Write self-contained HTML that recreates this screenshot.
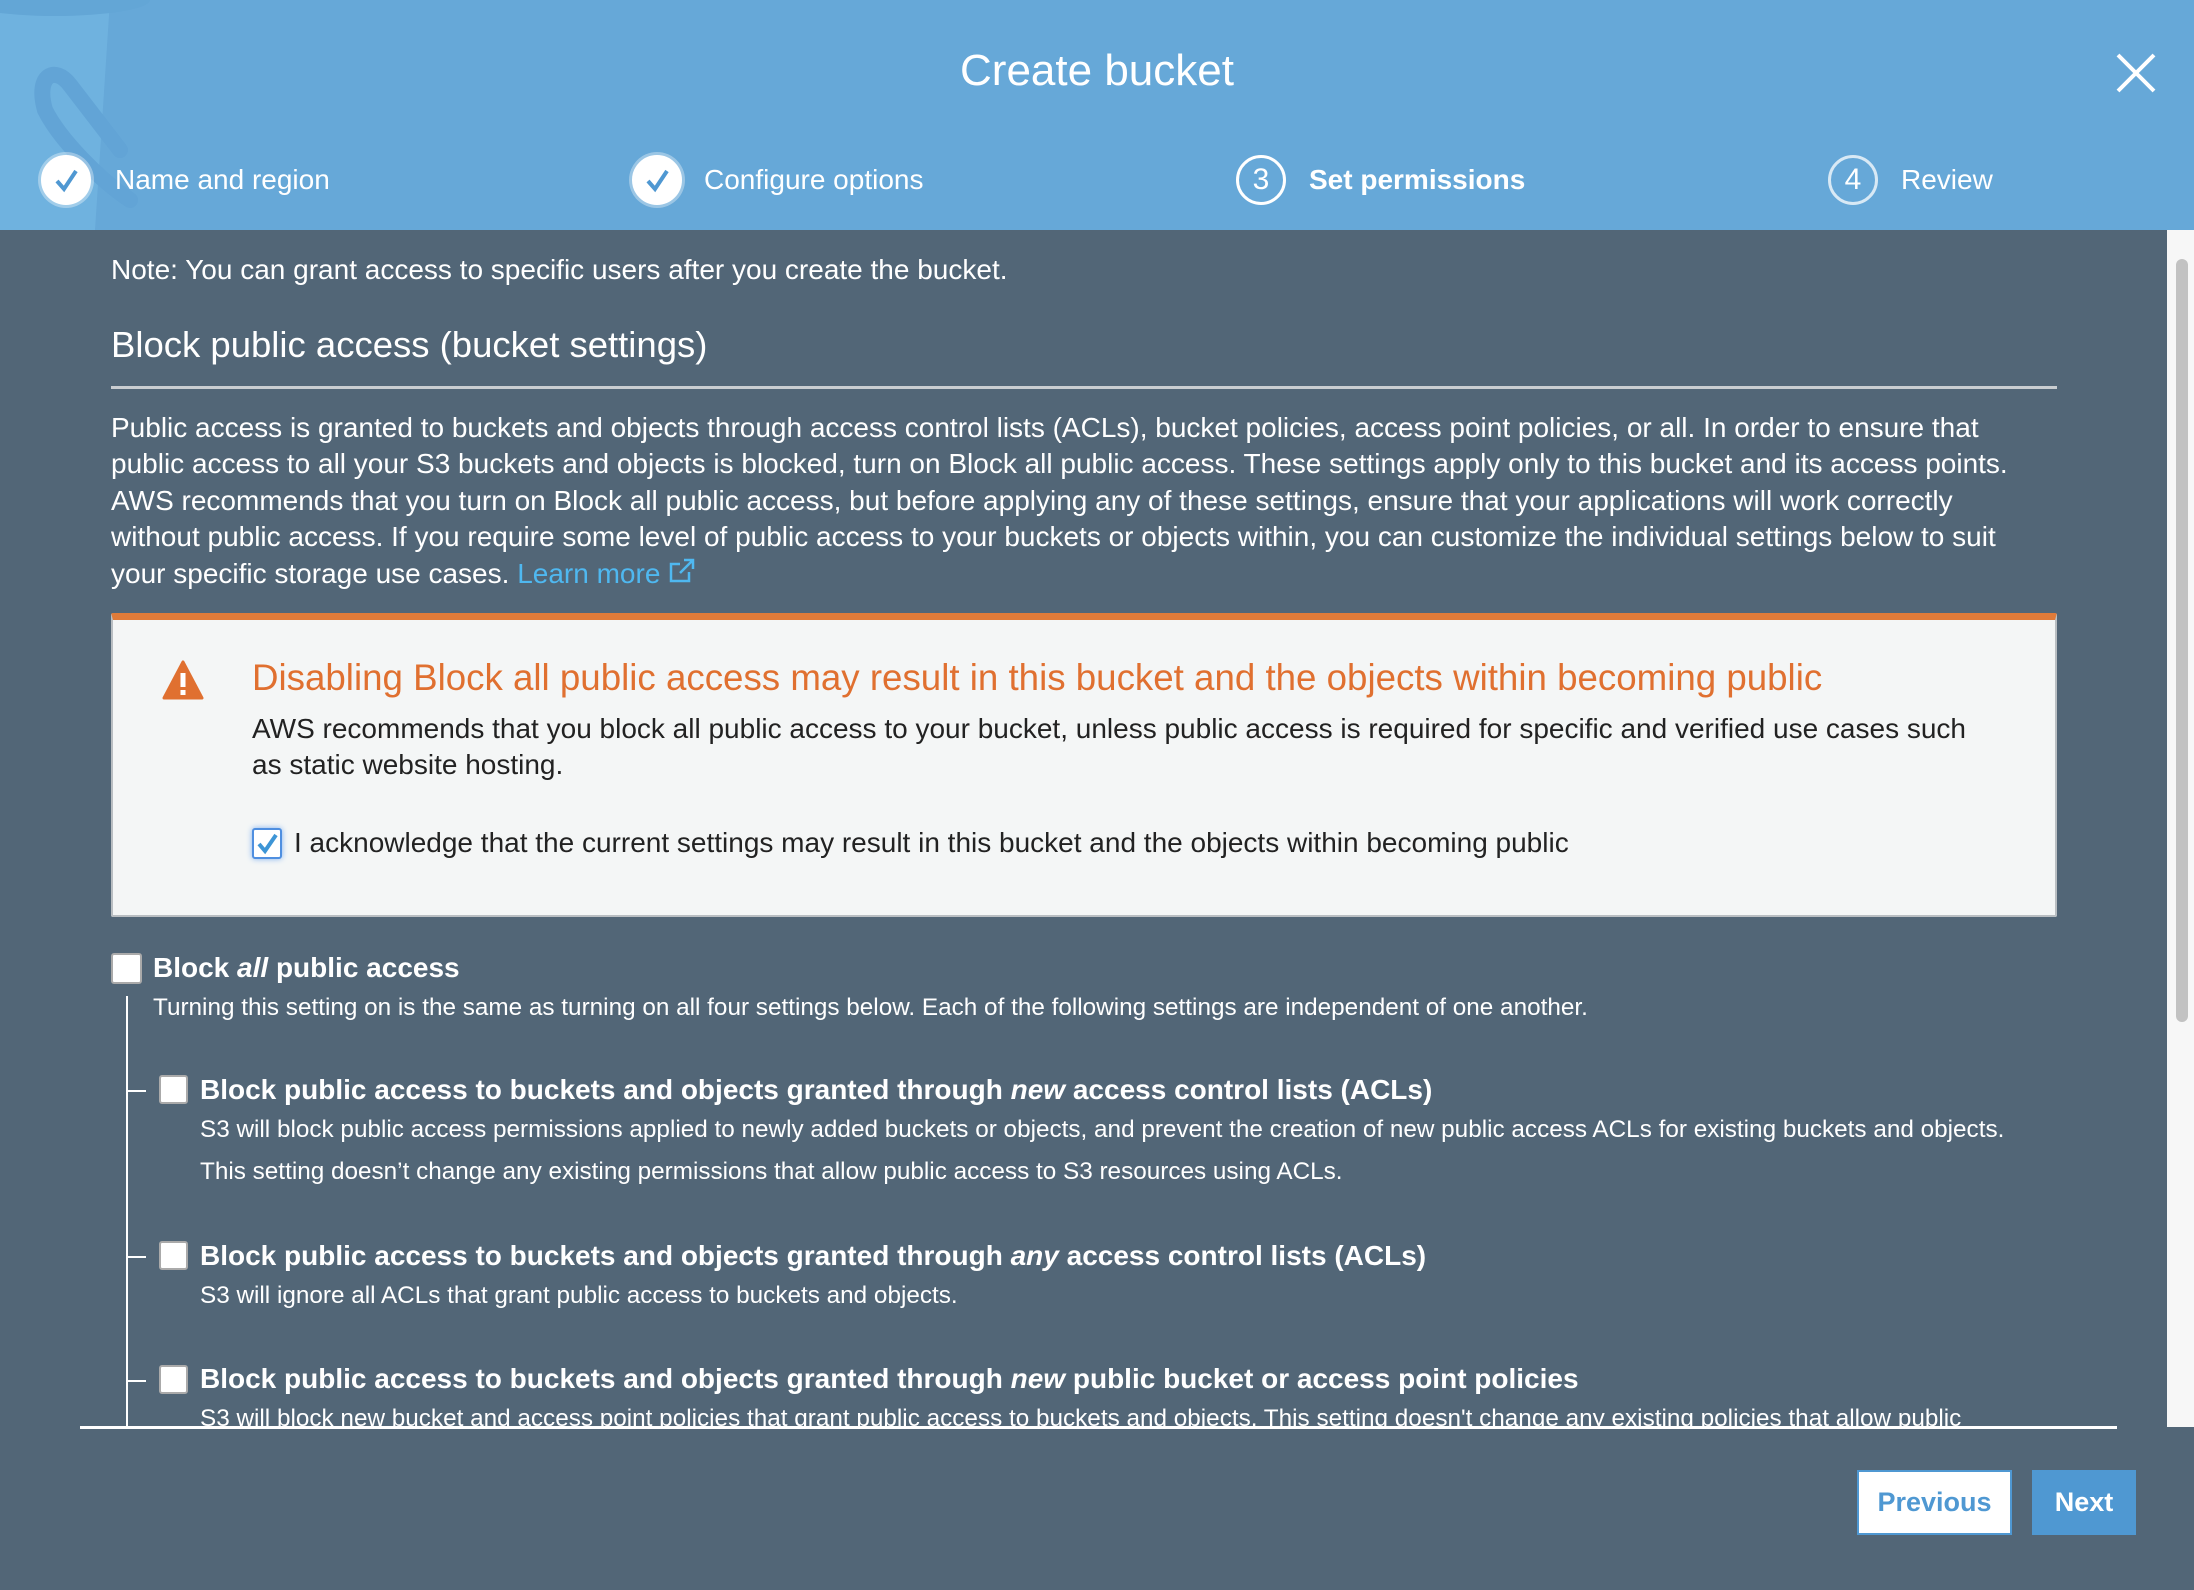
<!DOCTYPE html>
<html><head><meta charset="utf-8"><style>
*{margin:0;padding:0;box-sizing:border-box}
body{width:2194px;height:1590px;overflow:hidden;background:#526677;font-family:"Liberation Sans",Arial,sans-serif;color:#fff;position:relative}
.hdr{position:absolute;left:0;top:0;width:2194px;height:230px;background:#66a8d8;overflow:hidden}
.title{position:absolute;left:0;width:2194px;top:46px;text-align:center;font-size:44px;color:#fff}
.step{position:absolute;top:155px;height:46px;font-size:28px;line-height:46px}
.step .c{position:absolute;left:0;top:0;width:50px;height:50px;border:3px solid #fff;border-radius:50%;background:transparent;text-align:center;line-height:44px;font-size:30px}
.step .t{position:absolute;left:49px;top:2px;white-space:nowrap}
.abs{position:absolute;white-space:nowrap}
.txt{font-size:28px;line-height:36.4px}
.cb{position:absolute;width:29px;height:29px;background:#fff;border:2px solid #aaa;border-radius:3px}
.btitle{font-size:28px;font-weight:bold}
.sub{font-size:24.3px}
</style></head><body>
<div class="hdr">
<svg width="600" height="230" style="position:absolute;left:0;top:0">
<path d="M0 0 L110 0 L95 230 L0 230 Z" fill="#70b3e0" opacity="0.9"/>
<ellipse cx="55" cy="0" rx="95" ry="16" fill="#63a6d6"/>
<path d="M120 150 L70 85 C55 65 35 75 45 110 C60 140 100 180 130 200" fill="none" stroke="#62a4d6" stroke-width="16" stroke-linecap="round"/>
</svg>
<div class="title">Create bucket</div>
<svg width="44" height="44" style="position:absolute;left:2114px;top:51px"><path d="M4 4L40 40M40 4L4 40" stroke="#fff" stroke-width="4"/></svg>
<div class="step" style="left:41px"><div class="c" style="background:#fff;box-shadow:0 0 0 3px rgba(255,255,255,.35)"><svg width="44" height="44"><path d="M13 23 L20 31 L32 13" fill="none" stroke="#4f98d2" stroke-width="4"/></svg></div><div class="t" style="left:74px">Name and region</div></div>
<div class="step" style="left:632px"><div class="c" style="background:#fff;box-shadow:0 0 0 3px rgba(255,255,255,.35)"><svg width="44" height="44"><path d="M13 23 L20 31 L32 13" fill="none" stroke="#4f98d2" stroke-width="4"/></svg></div><div class="t" style="left:72px">Configure options</div></div>
<div class="step" style="left:1236px"><div class="c">3</div><div class="t" style="left:73px;font-weight:bold">Set permissions</div></div>
<div class="step" style="left:1828px"><div class="c" style="border-color:rgba(255,255,255,.75)">4</div><div class="t" style="left:73px">Review</div></div>
</div>
<div style="position:absolute;left:2167px;top:230px;width:27px;height:1197px;background:#f7f7f7"></div>
<div style="position:absolute;left:2176px;top:259px;width:12px;height:763px;background:#c2c2c2;border-radius:6px"></div>

<div class="abs txt" style="left:111px;top:252px">Note: You can grant access to specific users after you create the bucket.</div>
<div class="abs" style="left:111px;top:324px;font-size:36.5px">Block public access (bucket settings)</div>
<div class="abs" style="left:111px;top:386px;width:1946px;height:3px;background:#c9cdd1"></div>
<div class="abs txt" style="left:111px;top:410px;width:2050px;white-space:normal">Public access is granted to buckets and objects through access control lists (ACLs), bucket policies, access point policies, or all. In order to ensure that<br>public access to all your S3 buckets and objects is blocked, turn on Block all public access. These settings apply only to this bucket and its access points.<br>AWS recommends that you turn on Block all public access, but before applying any of these settings, ensure that your applications will work correctly<br>without public access. If you require some level of public access to your buckets or objects within, you can customize the individual settings below to suit<br>your specific storage use cases. <span style="color:#4fb8f0">Learn more <svg width="28" height="28" style="vertical-align:-2px"><path d="M21 15v9H3V7h9M16 3h9v9M25 3L12 16" fill="none" stroke="#4fb8f0" stroke-width="2.5"/></svg></span></div>

<div class="abs" style="left:111px;top:613px;width:1946px;height:304px;background:#f4f6f6;border:2px solid #b9bec2;border-top:7px solid #e07b39;border-radius:2px"></div>
<svg class="abs" style="left:162px;top:660px" width="42" height="40"><path d="M21 2 L40 38 L2 38 Z" fill="#e07030" stroke="#e07030" stroke-width="3" stroke-linejoin="round"/><rect x="18.5" y="13" width="5" height="14" fill="#fff"/><rect x="18.5" y="30" width="5" height="5" fill="#fff"/></svg>
<div class="abs" style="left:252px;top:657px;font-size:36.7px;color:#e07030">Disabling Block all public access may result in this bucket and the objects within becoming public</div>
<div class="abs txt" style="left:252px;top:711px;color:#222">AWS recommends that you block all public access to your bucket, unless public access is required for specific and verified use cases such<br>as static website hosting.</div>
<div class="abs" style="left:252px;top:828px;width:30px;height:31px;background:#fff;border:2px solid #4f8fe0;border-radius:3px;box-shadow:0 0 6px #7fb0f0"><svg width="26" height="27"><path d="M5 14 L11 21 L22 5" fill="none" stroke="#3d95d6" stroke-width="4"/></svg></div>
<div class="abs txt" style="left:294px;top:825px;color:#222">I acknowledge that the current settings may result in this bucket and the objects within becoming public</div>

<div class="cb" style="left:111px;top:953px;width:31px;height:31px"></div>
<div class="abs btitle" style="left:153px;top:952px">Block <i>all</i> public access</div>
<div class="abs" style="left:126px;top:996px;width:2px;height:431px;background:#fff"></div>
<div class="abs sub" style="left:153px;top:994px">Turning this setting on is the same as turning on all four settings below. Each of the following settings are independent of one another.</div>

<div class="abs" style="left:127px;top:1090px;width:19px;height:2px;background:#fff"></div>
<div class="cb" style="left:159px;top:1075px"></div>
<div class="abs btitle" style="left:200px;top:1074px">Block public access to buckets and objects granted through <i>new</i> access control lists (ACLs)</div>
<div class="abs sub" style="left:200px;top:1116px">S3 will block public access permissions applied to newly added buckets or objects, and prevent the creation of new public access ACLs for existing buckets and objects.</div>
<div class="abs sub" style="left:200px;top:1158px">This setting doesn’t change any existing permissions that allow public access to S3 resources using ACLs.</div>

<div class="abs" style="left:127px;top:1256px;width:19px;height:2px;background:#fff"></div>
<div class="cb" style="left:159px;top:1241px"></div>
<div class="abs btitle" style="left:200px;top:1240px">Block public access to buckets and objects granted through <i>any</i> access control lists (ACLs)</div>
<div class="abs sub" style="left:200px;top:1282px">S3 will ignore all ACLs that grant public access to buckets and objects.</div>

<div class="abs" style="left:127px;top:1380px;width:19px;height:2px;background:#fff"></div>
<div class="cb" style="left:159px;top:1365px"></div>
<div class="abs btitle" style="left:200px;top:1363px">Block public access to buckets and objects granted through <i>new</i> public bucket or access point policies</div>
<div class="abs" style="left:0;top:1395px;width:2160px;height:32px;overflow:hidden"><div class="abs sub" style="left:200px;top:10px">S3 will block new bucket and access point policies that grant public access to buckets and objects. This setting doesn't change any existing policies that allow public</div></div>
<div class="abs" style="left:80px;top:1426px;width:2037px;height:3px;background:#fff"></div>

<div class="abs" style="left:1857px;top:1470px;width:155px;height:65px;background:#fff;border:2px solid #4f98d2;color:#4f98d2;font-size:27px;font-weight:bold;text-align:center;line-height:61px">Previous</div>
<div class="abs" style="left:2032px;top:1470px;width:104px;height:65px;background:#4f98d2;color:#fff;font-size:27px;font-weight:bold;text-align:center;line-height:65px">Next</div>
</body></html>
